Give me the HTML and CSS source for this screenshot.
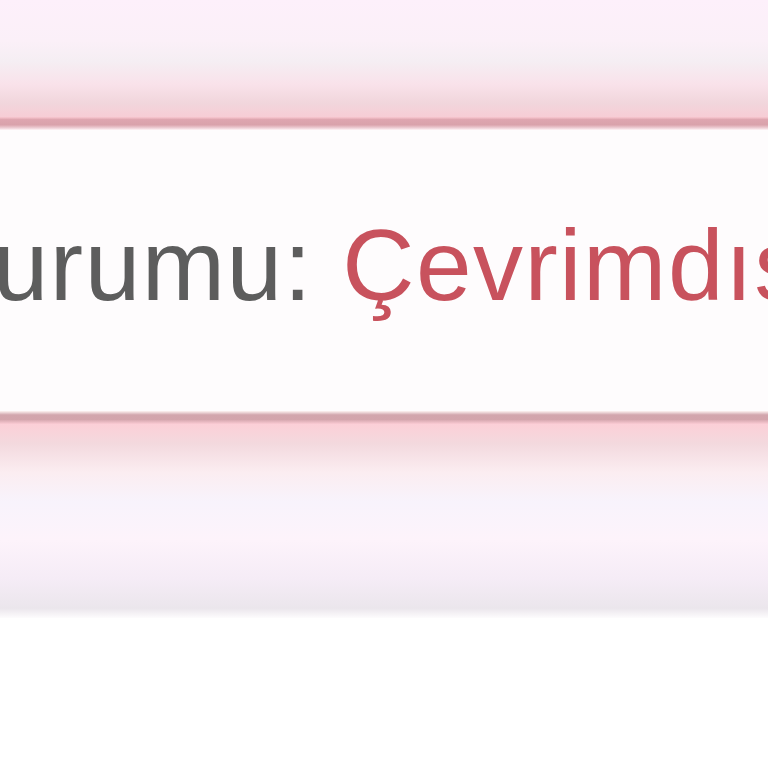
FILE: index.html
```html
<!DOCTYPE html>
<html lang="tr">
  <head>
    <meta charset="UTF-8" />
    <meta name="viewport" content="width=device-width, initial-scale=1.0" />
    <title>Durum</title>
    <link rel="stylesheet" href="styles.css">
  </head>

  <body>
    <div class="bar bar-top"></div>
    <div class="edge edge-top"></div>
    <div class="panel">
      <p class="status">Durumu: <span class="offline">Çevrimdışı</span></p>
    </div>
    <div class="edge edge-bottom"></div>
    <div class="bar bar-bottom"></div>
  </body>
</html>
```

FILE: styles.css
```css
* { box-sizing : border-box; }
body { margin:0; background-color:#fff; font-family:"Liberation Sans", Arial, sans-serif; overflow:hidden; }

.bar-top { height:117px; background:linear-gradient(#fdf0fb, #fbf0f8 35%, #f5eef3 52%, #f9e2ea 72%, #f1d6dc 88%, #f7cdd5); }
.edge { height:13px; }
.edge-top { background:linear-gradient(#f9c9d2, #dea5af 20%, #d9a2ab 60%, #efd0d6 85%, #fff5f7); }
.edge-bottom { background:linear-gradient(#fdf4f2, #d2a6ad 30%, #d3a5ac 65%, #fbcbd4); }

.panel { height:281px; background-color:#fefcfd; overflow:hidden; white-space:nowrap; }
.status { margin:0 0 0 -81px; padding-top:80px; font-size:100px; line-height:110px; color:#5d5d5d; letter-spacing:1.5px; }
.offline { color:#c8525d; }

.bar-bottom { height:194px; background:linear-gradient(#fccfd7, #f3d9de 10%, #fbedf1 25%, #f8f3fc 40%, #fdf3fb 60%, #f5ecf6 80%, #ebe6ec 95%, #fdfcfd); }
```
